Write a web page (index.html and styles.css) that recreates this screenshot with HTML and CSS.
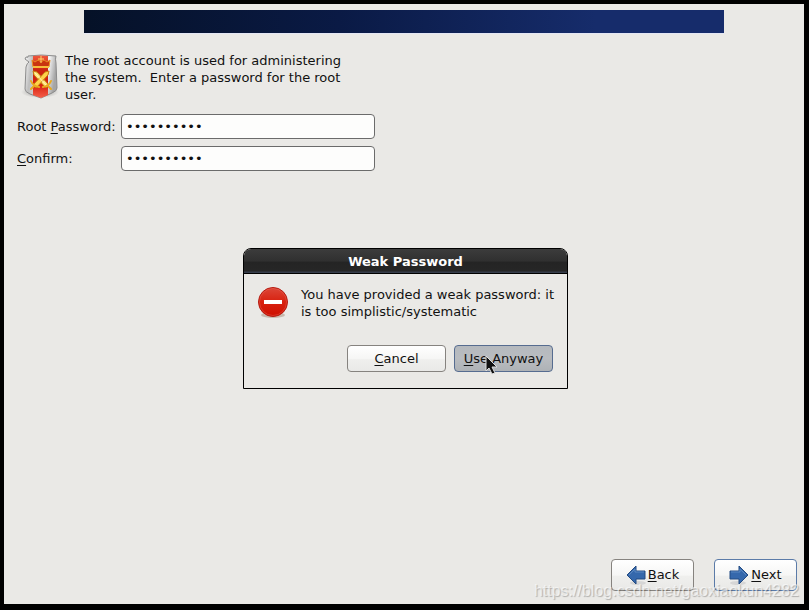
FILE: index.html
```html
<!DOCTYPE html>
<html lang="en">
    <head>
        <meta charset="utf-8">
        <title>Root Password</title>
        <link rel="stylesheet" href="styles.css">
    </head>
    <body>
        <div class="screen">
            <header class="banner"></header>

            <form class="setup">
                <div class="intro">
                    <svg class="shield" viewBox="0 0 38 50" aria-hidden="true">
                        <defs>
                            <linearGradient id="silver" x1="0" x2="1" y1="0" y2="0.2">
                                <stop offset="0" stop-color="#fbfbfb"/>
                                <stop offset="0.25" stop-color="#bdbdbd"/>
                                <stop offset="0.75" stop-color="#f4f4f4"/>
                                <stop offset="1" stop-color="#a5a5a5"/>
                            </linearGradient>
                            <linearGradient id="red" x1="0" x2="0" y1="0" y2="1">
                                <stop offset="0" stop-color="#f0573c"/>
                                <stop offset="0.35" stop-color="#cb2410"/>
                                <stop offset="0.7" stop-color="#d8200f"/>
                                <stop offset="1" stop-color="#f4604c"/>
                            </linearGradient>
                            <radialGradient id="shade">
                                <stop offset="0" stop-color="#555" stop-opacity="0.6"/>
                                <stop offset="1" stop-color="#555" stop-opacity="0"/>
                            </radialGradient>
                        </defs>
                        <ellipse cx="19" cy="42" rx="19" ry="6" fill="url(#shade)"/>
                        <path d="M7 6 Q20 4 35 6 Q34 9 35 13 L36 38 Q36 41 31 43 L20 48 L9 44 Q4 42 4 39 L5 17 Q6 13 8 12 L4 9 L5 7 Q8 8 7 6Z" fill="url(#silver)" stroke="#8b8b8b"/>
                        <path d="M12 6 Q20 5 27 6 L27 45 L20 48 L12 45Z" fill="url(#red)"/>
                        <path d="M11 10 L14 12 L17 10 L20 12 L23 10 L26 12 L29 10 L28 17 H12Z" fill="#c93410" stroke="#e98d20"/>
                        <path d="M20 6 V13 M17 9 H23" fill="none" stroke="#ffd968"/>
                        <path d="M12 17 H28" stroke="#f6bd3c" stroke-width="2"/>
                        <g stroke-linejoin="round">
                            <path d="M12 21 L16 22 L28 35 L25 38 L13 25Z" fill="#ffe377" stroke="#c57a10"/>
                            <path d="M28 21 L24 22 L12 35 L15 38 L27 25Z" fill="#ffd24a" stroke="#c57a10"/>
                            <path d="M14 23 L26 36" stroke="#fff7bd"/>
                        </g>
                        <path d="M10 31 Q12 36 18 37 M30 31 Q28 36 22 37 M13 36 L10 39 M27 36 L30 39" fill="none" stroke="#e9a91e" stroke-width="2" stroke-linecap="round"/>
                    </svg>
                    <p>The root account is used for administering<br>the system.&nbsp; Enter a password for the root<br>user.</p>
                </div>

                <div class="fields">
                    <label for="password">Root <u>P</u>assword:</label>
                    <input id="password" type="password" value="abcdefghij" autocomplete="off">
                    <label for="confirm"><u>C</u>onfirm:</label>
                    <input id="confirm" type="password" value="abcdefghij" autocomplete="off">
                </div>
            </form>

            <footer class="steps">
                <button type="button" class="button">
                    <svg class="arrow" viewBox="0 0 20 20" aria-hidden="true">
                        <ellipse cx="12" cy="18" rx="8" ry="2" fill="#d6d6d6"/>
                        <path d="M1 10 L10 1 V6 H19 V14 H10 V19Z" fill="#3568ac" stroke="#234b82"/>
                        <path d="M3 10 L9 4 V7 H18" fill="none" stroke="#5b88c2"/>
                    </svg>
                    <span><u>B</u>ack</span>
                </button>
                <button type="button" class="button default">
                    <svg class="arrow" viewBox="0 0 20 20" aria-hidden="true">
                        <ellipse cx="9" cy="18" rx="8" ry="2" fill="#d6d6d6"/>
                        <path d="M19 10 L10 1 V6 H1 V14 H10 V19Z" fill="#3568ac" stroke="#234b82"/>
                        <path d="M2 7 H11 V4 L17 10" fill="none" stroke="#5b88c2"/>
                    </svg>
                    <span><u>N</u>ext</span>
                </button>
            </footer>

            <div class="dialog" role="dialog" aria-labelledby="dialog-title">
                <h1 id="dialog-title" class="title">Weak Password</h1>
                <div class="message">
                    <svg class="stop" viewBox="0 0 32 34" aria-hidden="true">
                        <defs>
                            <linearGradient id="stop-red" x1="0" x2="0" y1="0" y2="1">
                                <stop offset="0" stop-color="#dc4638"/>
                                <stop offset="0.5" stop-color="#d8210f"/>
                                <stop offset="1" stop-color="#ce0f00"/>
                            </linearGradient>
                        </defs>
                        <ellipse cx="16" cy="29" rx="12" ry="3" fill="#c7b9ae"/>
                        <circle cx="16" cy="16" r="14.5" fill="url(#stop-red)" stroke="#b51a10"/>
                        <circle cx="16" cy="16" r="13.5" fill="none" stroke="#ec6a59" stroke-opacity="0.4"/>
                        <rect x="7" y="14" width="18" height="4" fill="#fff"/>
                    </svg>
                    <p>You have provided a weak password: it<br>is too simplistic/systematic</p>
                </div>
                <div class="actions">
                    <button type="button" class="button"><span><u>C</u>ancel</span></button>
                    <button type="button" class="button pressed">
                        <span><u>U</u>se Anyway</span>
                        <svg class="pointer" viewBox="0 0 14 20" aria-hidden="true">
                            <path d="M1 1 V16 L4 13 L7 19 L10 18 L7 12 H12Z" fill="#111" stroke="#ddd"/>
                        </svg>
                    </button>
                </div>
            </div>

            <div class="watermark">https://blog.csdn.net/gaoxiaokun4282</div>
        </div>
    </body>
</html>
```

FILE: styles.css
```css
* { box-sizing: border-box; }

body {
    display: flex;
    min-height: 100vh;
    margin: 0;
    padding: 4px 5px 6px 4px;
    background: #000;
    color: #111;
    font: 13px/17px "DejaVu Sans", sans-serif;
}

p, h1 { margin: 0; }

u { text-underline-offset: 2px; }

.screen {
    position: relative;
    display: flex;
    flex: 1;
    flex-direction: column;
    padding-top: 6px;
    background: #eae9e6;
}

.banner {
    width: 80%;
    height: 23px;
    margin: 0 auto;
    background: linear-gradient(to right, #051127, #0a1a45 40%, #162c6b 80%, #162c6b);
    box-shadow: 0 1px #e3e6f4;
}

.setup { padding: 17px 13px; }

.intro {
    display: flex;
    gap: 6px;
    padding-left: 4px;
}

.intro p { padding-top: 2px; }

.shield {
    width: 38px;
    height: 50px;
}

.fields {
    display: grid;
    grid-template-columns: 98px 254px;
    gap: 7px 6px;
    align-items: center;
    margin-top: 11px;
    white-space: nowrap;
}

.fields input {
    height: 25px;
    padding: 0 4px;
    border: 1px solid #6b6b6b;
    border-radius: 4px;
    background: #fdfdfc;
    color: #111;
    font: inherit;
    outline: none;
}

.button {
    position: relative;
    display: flex;
    align-items: center;
    justify-content: center;
    padding: 0;
    border: 1px solid #86837f;
    border-radius: 4px;
    background: linear-gradient(#fff, #f6f6f5 50%, #efefed 55%, #e9e9e7);
    color: #111;
    font: inherit;
}

.button.default { border-color: #5b7ba8; }

.button.pressed {
    border-color: #566c90;
    background: linear-gradient(#b5b9be, #b9bcc0 50%, #aeb2b6);
}

.steps {
    display: flex;
    justify-content: flex-end;
    gap: 20px;
    margin-top: auto;
    padding: 0 7px 13px;
}

.steps .button {
    width: 83px;
    height: 32px;
    gap: 2px;
    padding-bottom: 1px;
}

.arrow {
    width: 20px;
    height: 20px;
}

.dialog {
    position: absolute;
    top: 244px;
    left: calc(50% - 161px);
    width: 325px;
    border: 1px solid #000;
    border-radius: 8px 8px 0 0;
    background: #eae9e6;
}

.title {
    height: 25px;
    border-bottom: 1px solid #000;
    border-radius: 7px 7px 0 0;
    background: linear-gradient(#3c3c3c, #303030 50%, #242424 55%, #262626 90%, #3b4456);
    color: #fff;
    font: bold 13px/25px "DejaVu Sans", sans-serif;
    text-align: center;
}

.message {
    display: flex;
    gap: 12px;
    padding: 12px 12px 0 13px;
}

.stop {
    width: 32px;
    height: 34px;
}

.actions {
    display: flex;
    justify-content: flex-end;
    gap: 8px;
    padding: 25px 14px 16px;
}

.actions .button {
    width: 99px;
    height: 27px;
}

.pointer {
    position: absolute;
    top: 9px;
    left: 30px;
    width: 14px;
    height: 20px;
}

.watermark {
    position: absolute;
    right: 5px;
    bottom: 4px;
    color: rgba(255, 255, 255, 0.6);
    font: 16px/18px "Liberation Sans", sans-serif;
    text-shadow: 1px 1px 1px rgba(0, 0, 0, 0.25);
    pointer-events: none;
}
```
